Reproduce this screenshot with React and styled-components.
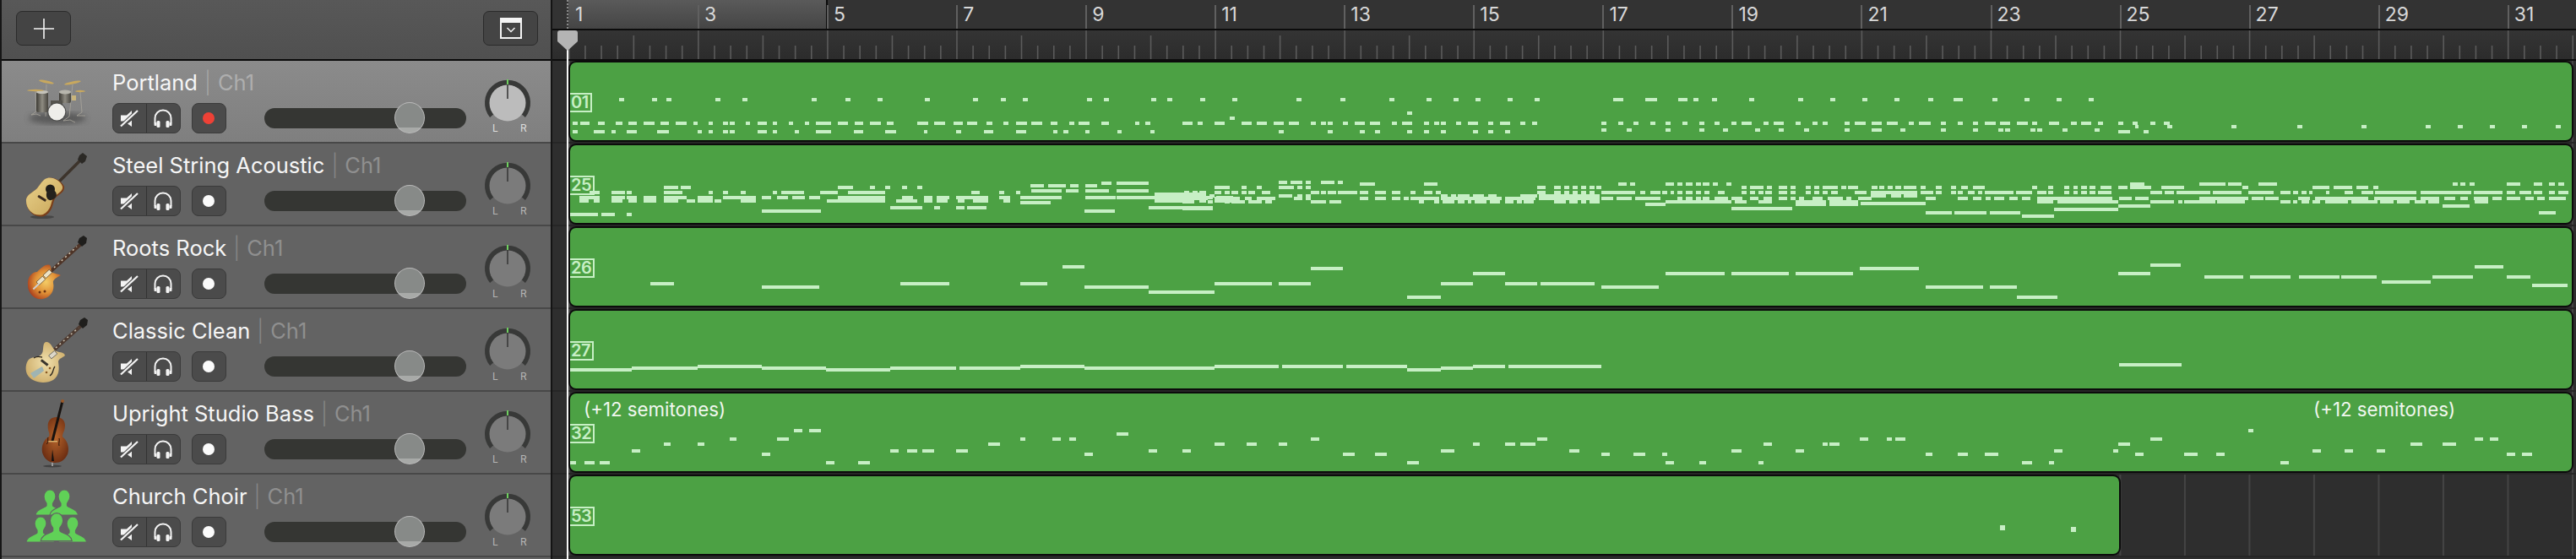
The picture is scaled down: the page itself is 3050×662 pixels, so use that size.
import React from "react";
import styled, { createGlobalStyle } from "styled-components";

const BAR = 76.53;
const NOTE_COLOR = "#c7efc5";

const GlobalStyle = createGlobalStyle`
  html, body {
    margin: 0;
    padding: 0;
    background: #2e2e2e;
    overflow: hidden;
  }
  * { box-sizing: border-box; }
`;

// turns runs read off the picture at some scale into page coordinates
const runs = (origin, scale, top, pairs) =>
  pairs.map(([a, b]) => {
    const x = Math.round(origin + a / scale);
    return [x, Math.max(x + 3, Math.round(origin + b / scale)), top];
  });
const dots = (top, xs) => xs.map((x) => [x, x + 6, top]);

const portlandNotes = [
  ...dots(116, [733, 772, 789, 847, 879, 961, 1001, 1039, 1095, 1152, 1185, 1211, 1287, 1307, 1363, 1382, 1421, 1459, 1535, 1587, 1645, 1689, 1721, 1747, 1785, 1817, 2005, 2027, 2071, 2129, 2167, 2205, 2243, 2283, 2359, 2397, 2435, 2473]),
  [1910, 1922, 116], [1948, 1962, 116], [1987, 1998, 116], [2313, 2324, 116],
  [1666, 1672, 132], [1456, 1462, 138],
  ...runs(660, 1.96, 144, [[35,47],[52,75],[95,110],[135,150],[165,185],[200,225],[240,258],[275,300],[315,325],[350,360],[385,395],[400,412],[437,447],[465,487],[500,510],[537,547],[575,585],[600,635],[650,675],[690,710],[725,750],[765,780],[835,860],[875,900],[920,940],[950,975],[995,1010],[1035,1047],[1065,1090],[1100,1125],[1145,1160],[1188,1200],[1210,1235],[1262,1280],[1340,1350],[1365,1375]]),
  ...runs(660, 1.96, 154, [[35,47],[85,110],[125,135],[160,185],[232,258],[325,335],[350,360],[385,395],[400,412],[465,487],[500,510],[550,560],[600,635],[688,710],[760,785],[850,858],[925,937],[990,1012],[1065,1088],[1150,1160],[1175,1185],[1225,1235],[1300,1310],[1375,1385]]),
  ...runs(1400, 1.96, 144, [[0,24],[35,47],[74,98],[137,161],[172,196],[212,235],[247,270],[298,310],[322,333],[337,349],[372,384],[400,423],[435,459],[486,498],[510,533],[561,573],[584,596],[600,612],[635,647],[662,686],[710,721],[737,760],[784,796],[811,823],[972,984],[1011,1023],[1047,1058],[1086,1098],[1121,1133],[1160,1172],[1200,1211],[1235,1247],[1274,1286],[1298,1321],[1348,1360],[1372,1396],[1423,1435],[1462,1474],[1486,1498],[1537,1549],[1560,1568]]),
  ...runs(1400, 1.96, 154, [[223,235],[337,349],[412,423],[447,459],[521,533],[561,573],[600,612],[674,686],[710,721],[749,760]]),
  ...runs(1400, 1.96, 152, [[972,984],[1031,1043],[1121,1133],[1200,1211],[1254,1266],[1329,1341],[1384,1396],[1443,1455],[1537,1549]]),
  ...runs(2200, 1.845, 144, [[0,16],[30,52],[63,86],[111,122],[133,158],[181,192],[218,229],[251,262],[276,300],[310,333],[347,370],[380,392],[417,440],[465,478],[488,510],[524,535],[568,579],[599,610],[638,650],[668,680]]),
  ...runs(2200, 1.845, 152, [[30,52],[92,103],[181,192],[251,262],[306,318],[321,333],[376,388],[391,403],[446,457],[516,528]]),
  ...runs(2200, 1.845, 154, [[568,594],[624,635]]),
  ...runs(2200, 1.845, 148, [[605,612],[675,686],[815,826],[959,970],[1099,1111],[1240,1251],[1310,1321],[1380,1391],[1450,1461],[1524,1535]]),
];

const acousticNotes = [
  ...runs(660, 1.96, 220, [[247,280],[287,310],[650,686],[725,737],[760,772],[800,812],[835,847],[1525,1560]]),
  ...runs(660, 1.96, 226, [[75,98],[125,157],[160,172],[247,290],[350,360],[385,395],[425,437],[500,510],[520,572],[610,650],[675,760],[960,980],[1025,1037],[1065,1075]]),
  ...runs(660, 1.96, 232, [[50,98],[125,157],[160,185],[200,230],[247,300],[325,360],[385,460],[475,495],[510,535],[545,575],[585,610],[650,760],[800,825],[850,870],[880,910],[925,1000],[1025,1050],[1075,1170],[1225,1295],[1298,1372],[1372,1520],[1528,1568]]),
  ...runs(660, 1.96, 236, [[50,72],[85,98],[125,150],[165,185],[200,230],[247,280],[300,320],[325,360],[365,380],[425,460],[625,760],[785,835],[850,870],[880,905],[930,945],[965,1000],[1035,1050],[1385,1475],[1490,1505],[1525,1568]]),
  ...runs(660, 1.96, 238, [[1075,1145]]),
  ...runs(660, 1.96, 244, [[772,847],[875,887],[925,945],[950,996],[1372,1521]]),
  ...runs(660, 1.96, 248, [[474,612],[1223,1294]]),
  ...runs(660, 1.96, 252, [[30,94],[102,133],[160,172]]),
  ...runs(660, 1.96, 218, [[1098,1128],[1138,1180],[1190,1210],[1225,1253]]),
  ...runs(660, 1.96, 215, [[1262,1285],[1298,1372]]),
  ...runs(660, 1.96, 224, [[1100,1170],[1180,1210],[1225,1280],[1298,1372]]),
  ...runs(660, 1.96, 228, [[1385,1505]]),
  ...runs(1400, 1.96, 214, [[223,243],[251,278],[286,298],[321,353],[360,372]]),
  ...runs(1400, 1.96, 216, [[412,447],[561,592],[1011,1031],[1039,1050],[1121,1141],[1149,1160],[1168,1184],[1192,1204],[1207,1223],[1231,1243],[1262,1274]]),
  ...runs(1400, 1.96, 220, [[74,110],[137,149],[172,184],[223,259],[267,278],[286,298],[823,843],[862,878],[886,898],[906,918],[925,937],[945,957],[960,972],[1298,1309],[1317,1348],[1356,1368],[1384,1403],[1411,1423],[1446,1458],[1466,1478],[1486,1521],[1529,1541],[1545,1568]]),
  ...runs(1400, 1.96, 226, [[4,16],[24,35],[39,55],[74,90],[98,110],[114,129],[137,149],[153,169],[184,204],[298,318],[321,333],[337,357],[361,405],[412,431],[447,473],[486,505],[529,541],[561,580],[588,600],[823,843],[862,878],[886,898],[906,918],[925,937],[945,957],[972,1050],[1062,1074],[1086,1110],[1113,1125],[1133,1141],[1149,1160],[1168,1184],[1192,1204],[1212,1223],[1243,1258],[1298,1309],[1317,1329],[1337,1348],[1352,1368],[1384,1403],[1411,1423],[1446,1458],[1466,1478],[1486,1498],[1505,1521],[1560,1568]]),
  ...runs(1400, 1.96, 230, [[0,55],[63,74],[223,255],[267,278],[286,298],[600,615],[624,635],[639,666],[675,700],[710,729],[784,823],[827,968]]),
  ...runs(1400, 1.96, 233, [[0,58],[74,98],[110,133],[145,161],[172,216],[259,278],[286,298],[412,431],[447,473],[486,505],[513,525],[529,596],[600,741],[749,819],[827,968],[972,1000],[1007,1043],[1051,1109],[1149,1160],[1168,1184],[1192,1204],[1207,1223],[1235,1266],[1274,1300],[1317,1337],[1348,1368],[1384,1403],[1411,1423],[1431,1443],[1462,1486],[1497,1533],[1541,1553]]),
  ...runs(1400, 1.96, 237, [[0,27],[59,71],[98,110],[114,145],[153,184],[192,208],[298,333],[341,368],[549,561],[584,596],[604,631],[639,655],[663,670],[678,706],[713,737],[749,768],[776,788],[792,815],[862,890],[898,918],[925,937],[945,968],[1121,1274],[1282,1309],[1337,1368],[1423,1494],[1501,1568]]),
  ...runs(1400, 1.96, 240, [[1074,1121],[1423,1494],[1501,1568]]),
  ...runs(1400, 1.96, 245, [[0,71],[1274,1415]]),
  ...runs(2200, 1.845, 216, [[594,625],[745,802],[808,837],[874,915],[1299,1310],[1316,1327],[1336,1347],[1417,1447],[1476,1495],[1510,1522],[1530,1542]]),
  ...runs(2200, 1.845, 220, [[30,42],[46,58],[64,76],[82,94],[100,128],[136,148],[170,182],[203,214],[226,240],[250,277],[380,392],[415,427],[450,462],[470,480],[488,500],[506,518],[530,553],[568,588],[594,640],[662,712],[840,852],[992,1029],[1038,1080],[1088,1115],[1125,1136]]),
  ...runs(2200, 1.845, 226, [[0,18],[28,130],[136,165],[170,182],[203,214],[218,229],[240,255],[262,272],[277,340],[345,380],[392,411],[415,427],[450,462],[470,480],[488,500],[506,518],[524,553],[638,665],[670,690],[695,770],[775,838],[852,908],[922,945],[950,962],[968,979],[985,993],[1023,1029],[1062,1081],[1100,1125],[1130,1220],[1228,1340],[1345,1408],[1417,1436],[1445,1470],[1476,1495],[1510,1522],[1530,1552]]),
  ...runs(2200, 1.845, 230, [[28,60],[72,95],[100,130]]),
  ...runs(2200, 1.845, 233, [[0,30],[148,170],[218,240],[250,270],[278,290],[297,320],[330,348],[358,376],[392,555],[570,597],[605,635],[745,852],[860,885],[889,918],[962,987],[998,1115],[1128,1220],[1228,1270],[1280,1305],[1315,1332],[1345,1377],[1385,1405],[1417,1447],[1458,1476],[1484,1500],[1510,1546]]),
  ...runs(2200, 1.845, 237, [[392,427],[435,568],[638,690],[700,708],[712,780],[784,845],[922,945],[950,960],[968,985],[992,1010],[1020,1070],[1078,1135],[1140,1170],[1178,1205],[1215,1240],[1245,1270],[1347,1377]]),
  ...runs(2200, 1.845, 239, [[5,148]]),
  ...runs(2200, 1.845, 242, [[568,638],[1277,1336]]),
  ...runs(2200, 1.845, 246, [[428,568]]),
  ...runs(2200, 1.845, 250, [[148,204],[210,280],[288,355],[1487,1524]]),
  ...runs(2200, 1.845, 254, [[358,428]]),
];

const rootsNotes = [
  [770,798,334],[902,970,338],[1066,1124,334],[1208,1240,334],[1258,1284,314],[1284,1360,338],[1360,1438,344],
  [1438,1506,334],[1514,1552,334],[1552,1590,316],[1666,1706,350],[1706,1744,334],[1744,1782,322],[1782,1820,334],
  [1824,1888,334],[1896,1964,338],[1972,2042,322],[2050,2118,322],[2126,2194,322],[2202,2272,316],[2280,2348,338],
  [2356,2388,338],[2388,2436,350],[2508,2546,322],[2546,2582,312],[2610,2656,326],[2664,2712,326],[2722,2770,326],
  [2772,2814,326],[2820,2878,332],[2880,2928,326],[2930,2964,314],[2968,2996,326],[2998,3040,336],
];

const classicNotes = [
  [675,748,436],[748,826,434],[826,902,432],[902,978,434],[978,1054,436],[1054,1132,434],[1136,1208,434],
  [1208,1284,432],[1284,1438,434],[1438,1514,432],[1518,1590,432],[1594,1666,432],[1666,1706,436],[1706,1744,434],
  [1744,1782,432],[1786,1896,432],[2509,2583,430],
];

const bassNotes = [
  [675,682,546],[692,704,546],[710,722,546],[748,758,532],[786,794,524],[826,834,524],[864,872,518],[902,912,536],
  [920,934,518],[940,950,508],[958,972,508],[978,988,546],[1016,1030,546],[1054,1064,532],[1074,1086,532],[1092,1106,532],
  [1132,1146,532],[1170,1184,524],[1208,1214,518],[1246,1256,518],[1266,1274,518],[1284,1294,536],[1322,1336,512],
  [1360,1370,532],[1400,1410,532],[1438,1450,524],[1476,1488,524],[1514,1524,524],[1552,1562,518],[1590,1604,536],
  [1628,1642,536],[1666,1680,546],[1706,1722,532],[1744,1752,524],[1782,1794,524],[1800,1818,524],[1820,1832,518],
  [1858,1870,532],[1896,1906,536],[1934,1948,536],[1968,1974,536],[1972,1982,546],[2012,2020,546],[2050,2062,532],
  [2082,2088,546],[2088,2098,524],[2126,2136,532],[2158,2164,524],[2166,2178,524],[2202,2212,518],[2234,2240,518],
  [2244,2256,518],[2280,2288,536],[2318,2330,536],[2350,2366,536],[2394,2406,546],[2426,2432,546],[2432,2442,532],
  [2502,2508,532],[2508,2522,524],[2528,2538,536],[2546,2560,518],[2586,2602,536],[2624,2634,536],[2662,2668,508],
  [2700,2710,546],[2738,2748,532],[2776,2786,532],[2814,2824,532],[2854,2868,524],[2892,2908,524],[2930,2940,518],
  [2948,2958,518],[2968,2978,536],[2986,2998,536],
];

const tracks = [
  { name: "Portland", Icon: DrumsIcon, label: "01", notes: portlandNotes, width: 2374, selected: true },
  { name: "Steel String Acoustic", Icon: AcousticIcon, label: "25", notes: acousticNotes, width: 2374 },
  { name: "Roots Rock", Icon: LesPaulIcon, label: "26", notes: rootsNotes, width: 2374 },
  { name: "Classic Clean", Icon: HollowIcon, label: "27", notes: classicNotes, width: 2374 },
  { name: "Upright Studio Bass", Icon: BassIcon, label: "32", notes: bassNotes, width: 2374, transposed: true },
  { name: "Church Choir", Icon: ChoirIcon, label: "53", notes: [[2368, 2374, 622, 6], [2452, 2458, 624, 6]], width: 1838 },
];

export default function App() {
  return (
    <Page>
      <GlobalStyle />
      <Sidebar>
        <Header>
          <HeaderButton>
            <svg width="26" height="26" viewBox="0 0 26 26">
              <path d="M13 1v24M1 13h24" stroke="#f4f4f4" strokeWidth="1.6" />
            </svg>
          </HeaderButton>
          <HeaderButton>
            <svg width="28" height="27" viewBox="0 0 28 27">
              <rect x="2" y="2" width="24" height="23" fill="none" stroke="#f4f4f4" strokeWidth="2" />
              <rect x="2" y="1" width="24" height="6" fill="#f4f4f4" />
              <path d="M9.5 13l4.5 4.5 4.5-4.5" fill="none" stroke="#f4f4f4" strokeWidth="1.5" />
            </svg>
          </HeaderButton>
        </Header>
        {tracks.map((t) => (
          <TrackRow key={t.name} $selected={t.selected}>
            <IconSlot>
              <t.Icon />
            </IconSlot>
            <TrackInfo>
              <NameLine>
                {t.name}
                <Divider $selected={t.selected}>|</Divider>
                <Channel $selected={t.selected}>Ch1</Channel>
              </NameLine>
              <Controls>
                <ButtonGroup>
                  <GroupButton>
                    <MuteIcon />
                  </GroupButton>
                  <GroupButton>
                    <HeadphonesIcon />
                  </GroupButton>
                </ButtonGroup>
                <RecordButton>
                  <RecordDot $armed={t.selected} />
                </RecordButton>
                <Fader>
                  <FaderThumb />
                </Fader>
              </Controls>
            </TrackInfo>
            <PanKnob selected={t.selected} />
          </TrackRow>
        ))}
      </Sidebar>

      <Timeline>
        <BarRuler>
          <CycleRegion />
          {Array.from({ length: 16 }, (_, i) => (
            <BarCell key={i} $first={i === 0}>
              {i * 2 + 1}
            </BarCell>
          ))}
        </BarRuler>
        <BeatRuler>
          <BeatTicks />
        </BeatRuler>
        {tracks.map((t) => (
          <Lane key={t.name}>
            <Region $width={t.width}>
              <Notes>
                {t.notes.map(([x1, x2, y, h], i) => (
                  <rect key={i} x={x1 - 675} y={y - (74 + 98 * tracks.indexOf(t))} width={x2 - x1} height={h || 4} />
                ))}
              </Notes>
              <RegionLabel>{t.label}</RegionLabel>
              {t.transposed && (
                <>
                  <Transpose $left={16}>(+12 semitones)</Transpose>
                  <Transpose $left={2064}>(+12 semitones)</Transpose>
                </>
              )}
            </Region>
          </Lane>
        ))}
        <Playhead>
          <svg width="26" height="26" viewBox="0 0 26 26">
            <path d="M1 4a3 3 0 0 1 3-3h18a3 3 0 0 1 3 3v10l-12 11L1 14z" fill="#b4b4b4" />
          </svg>
        </Playhead>
      </Timeline>
    </Page>
  );
}

function MuteIcon() {
  return (
    <svg width="22" height="22" viewBox="0 0 22 22">
      <path d="M1 7.5h7L14 2v18l-6-5.500H1z" fill="#f4f4f4" />
      <path d="M0 23L23 1" stroke="#4b4b4b" strokeWidth="6" />
      <path d="M1 20.500L21 2" stroke="#f4f4f4" strokeWidth="2.200" />
      <path d="M14 14v7l-5-3.500z" fill="#f4f4f4" />
    </svg>
  );
}

function HeadphonesIcon() {
  return (
    <svg width="24" height="23" viewBox="0 0 24 23">
      <path d="M2.500 17v-6a9.500 9.500 0 0 1 19 0v6" fill="none" stroke="#f4f4f4" strokeWidth="2" />
      <rect x="4.500" y="14" width="4" height="8" rx="1.500" fill="#f4f4f4" />
      <rect x="15.500" y="14" width="4" height="8" rx="1.500" fill="#f4f4f4" />
      <rect x="1.500" y="16" width="3" height="4" rx="1" fill="#f4f4f4" />
      <rect x="19.500" y="16" width="3" height="4" rx="1" fill="#f4f4f4" />
    </svg>
  );
}

function PanKnob({ selected }) {
  return (
    <KnobSvg width="60" height="70" viewBox="0 0 60 70">
      <path d="M11.400 47A24 24 0 1 1 48.600 47" fill="none" stroke="#383938" strokeWidth="6" />
      <circle cx="30" cy="32" r="21.500" fill={selected ? "#bcbcbc" : "#7b7b7b"} />
      <rect x="29" y="4" width="2" height="6" fill="#6fd05f" />
      <rect x="29.200" y="10" width="1.600" height="17" fill="#3a3a3a" />
      <KnobLetter x="12" y="66" $selected={selected}>L</KnobLetter>
      <KnobLetter x="45" y="66" $selected={selected}>R</KnobLetter>
    </KnobSvg>
  );
}

function BeatTicks() {
  const ticks = [];
  for (let bar = 0; bar < 32; bar++) {
    const x = 19 + bar * BAR;
    ticks.push(<rect key={bar} x={x} y={bar % 2 === 0 ? 0 : 6} width="1.600" height="34" />);
    for (let beat = 1; beat < 4; beat++) {
      ticks.push(<rect key={`${bar}-${beat}`} x={x + (beat * BAR) / 4} y="18" width="1.600" height="16" />);
    }
  }
  return <TickSvg width="2396" height="34">{ticks}</TickSvg>;
}

function DrumsIcon() {
  return (
    <svg width="84" height="84" viewBox="0 0 84 84">
      <defs>
        <filter id="drumShadow"><feGaussianBlur stdDeviation="3" /></filter>
        <linearGradient id="shell" x1="0" x2="1">
          <stop offset="0" stopColor="#3c3a34" />
          <stop offset=".5" stopColor="#8f8c82" />
          <stop offset="1" stopColor="#46443e" />
        </linearGradient>
      </defs>
      <ellipse cx="44" cy="60" rx="34" ry="7" fill="#4a4a4a" opacity=".7" filter="url(#drumShadow)" />
      <g stroke="#a9a69c" strokeWidth=".8" fill="none">
        <path d="M31 20L30 58M62 20l-4 38M18 28l1 24M71 29l2 24" />
        <path d="M19 52l-6 4 6-1 5 2M58 58l-7 5 8-1 6 3M73 53l-6 4 10 0" />
      </g>
      <rect x="19" y="29" width="14" height="24" rx="2" fill="url(#shell)" />
      <ellipse cx="26" cy="29" rx="7" ry="2" fill="#c5c3ba" />
      <rect x="46" y="29" width="14" height="13" rx="2" fill="url(#shell)" />
      <ellipse cx="53" cy="29" rx="7" ry="2.500" fill="#b8b6ad" />
      <rect x="61" y="33" width="5" height="6" fill="#c9b47b" />
      <rect x="36" y="39" width="14" height="9" fill="#55534d" />
      <circle cx="43.300" cy="52.500" r="11" fill="#4a4a48" />
      <circle cx="43.300" cy="52.500" r="10" fill="#efeeea" />
      <ellipse cx="31" cy="17" rx="9" ry="1.600" fill="#c8a85e" transform="rotate(12 31 17)" />
      <ellipse cx="62" cy="18" rx="10" ry="1.600" fill="#c8a85e" transform="rotate(-12 62 18)" />
      <ellipse cx="18" cy="27" rx="10" ry="1.200" fill="#c8a85e" />
      <ellipse cx="71" cy="28" rx="6" ry="1.200" fill="#c8a85e" />
    </svg>
  );
}

function AcousticIcon() {
  return (
    <svg width="84" height="84" viewBox="0 0 84 84">
      <defs>
        <linearGradient id="spruce" x1="0" y1="0" x2="1" y2="1">
          <stop offset="0" stopColor="#e9d28c" />
          <stop offset="1" stopColor="#c8a558" />
        </linearGradient>
      </defs>
      <ellipse cx="26" cy="79" rx="14" ry="2" fill="#333" opacity=".6" />
      <path d="M38 45L72 11" stroke="#3d342c" strokeWidth="3.500" />
      <path d="M70 6l4-3 5 4-2 6-4 3-5-5z" fill="#2b2925" />
      <path d="M33 33C39 31 49 36 52 43C53 50 45 52 41 57C38 63 39 73 28 78C17 81 6 71 7 58C8 52 15 50 20 45C24 40 27 34 33 33Z" fill="#7a3f1a" />
      <path d="M32 33C38 31 48 36 50 43C51 49 44 51 39 56C36 62 37 71 27 76C16 79 6 70 7 58C8 52 15 50 20 45C24 40 27 34 32 33Z" fill="url(#spruce)" />
      <circle cx="35.500" cy="46" r="5.500" fill="#1e1c18" />
      <path d="M31 51a6 6 0 1 1 8 7c-4 3-9 0-8-7z" fill="#24211c" />
      <rect x="20" y="55" width="11" height="3" rx="1" fill="#3a2a1d" transform="rotate(32 25 57)" />
    </svg>
  );
}

function LesPaulIcon() {
  return (
    <svg width="84" height="84" viewBox="0 0 84 84">
      <defs>
        <radialGradient id="burst" cx=".55" cy=".5" r=".6">
          <stop offset="0" stopColor="#f4cc66" />
          <stop offset=".55" stopColor="#df8f36" />
          <stop offset="1" stopColor="#a5371a" />
        </radialGradient>
      </defs>
      <path d="M33 48L73 12" stroke="#4e3427" strokeWidth="4" />
      <path d="M40 41l27-25" stroke="#d8cdb8" strokeWidth="1.500" strokeDasharray="2 4" />
      <path d="M70 6l5-3 4 3-1 6-5 4-5-5z" fill="#1f1e1c" />
      <path d="M35 38C30 36 24 42 20 46C14 46 8 52 9 62C9 72 18 80 27 78C36 76 41 68 39 59C38 55 44 52 48 50C44 48 39 48 37 46C36 44 37 40 35 38Z" fill="url(#burst)" />
      <rect x="27" y="46" width="10" height="5" fill="#ece2c5" stroke="#4a3a28" strokeWidth=".6" transform="rotate(-43 32 48)" />
      <rect x="19" y="54" width="10" height="5" fill="#ece2c5" stroke="#4a3a28" strokeWidth=".6" transform="rotate(-43 24 56)" />
      <rect x="14" y="62" width="10" height="2" fill="#cfcfcf" transform="rotate(-43 19 63)" />
      <circle cx="23" cy="70" r="1.500" fill="#6b3312" />
      <circle cx="29" cy="69" r="1.500" fill="#6b3312" />
    </svg>
  );
}

function HollowIcon() {
  return (
    <svg width="84" height="84" viewBox="0 0 84 84">
      <defs>
        <radialGradient id="maple" cx=".5" cy=".5" r=".65">
          <stop offset="0" stopColor="#f0e0ad" />
          <stop offset="1" stopColor="#c8a55f" />
        </radialGradient>
      </defs>
      <path d="M36 44L74 10" stroke="#4d3a30" strokeWidth="4" />
      <path d="M42 38l27-24" stroke="#cfc6b4" strokeWidth="1.500" strokeDasharray="2 4" />
      <path d="M71 5l5-3 4 3-1 6-5 4-5-5z" fill="#1f1e1c" />
      <path d="M30 31C36 30 38 38 41 41C45 44 52 42 53 47C50 50 46 50 45 54C46 62 47 70 39 76C30 81 14 80 8 69C5 62 7 52 13 50C19 48 24 49 26 44C28 40 26 33 30 31Z" fill="url(#maple)" />
      <path d="M16 50c5-3 7-1 10-1M35 71c5-3 3-8 6-11" fill="none" stroke="#2a241c" strokeWidth="1.300" />
      <rect x="34" y="44" width="9" height="5" fill="#dcd7c8" stroke="#3a3a3a" strokeWidth=".6" transform="rotate(-40 38 46)" />
      <rect x="24" y="54" width="10" height="3" fill="#3a352d" transform="rotate(38 29 55)" />
      <path d="M12 68l14-8 2 5-12 9z" fill="#9fb4b2" />
      <circle cx="35" cy="62" r="1.300" fill="#8a5a22" />
      <circle cx="31" cy="67" r="1.300" fill="#8a5a22" />
    </svg>
  );
}

function BassIcon() {
  return (
    <svg width="84" height="84" viewBox="0 0 84 84">
      <defs>
        <radialGradient id="spruceBass" cx=".5" cy=".45" r=".65">
          <stop offset="0" stopColor="#b5642b" />
          <stop offset="1" stopColor="#64270f" />
        </radialGradient>
      </defs>
      <ellipse cx="38" cy="80" rx="11" ry="1.500" fill="#333" opacity=".7" />
      <rect x="37" y="74" width="2" height="6" fill="#9a9a9a" />
      <g transform="rotate(3 41 48)">
        <path d="M42 22C35 22 31 27 32 34C32 39 35 41 34 45C28 49 25 57 27 65C30 73 36 76 42 76C48 76 54 73 57 65C59 57 56 49 50 45C49 41 52 39 52 34C53 27 49 22 42 22Z" fill="url(#spruceBass)" />
      </g>
      <path d="M50 3L38 50" stroke="#17120f" strokeWidth="3" />
      <circle cx="50" cy="3" r="2" fill="#9a5a2b" />
      <path d="M38 60l-1 14h3z" fill="#151210" />
      <rect x="32" y="50" width="12" height="1.500" fill="#d5b06c" />
      <path d="M31 54c3-2 1-6 2-8M46 56c-1-3 1-6 0-9" fill="none" stroke="#27130a" strokeWidth="1" />
    </svg>
  );
}

function ChoirSinger({ x, y, scale = 1 }) {
  return (
    <path
      transform={`translate(${x} ${y}) scale(${scale})`}
      d="M0-13c4.500 0 7 3.500 7 8 0 3.500-2 6-3.500 8v3c2 3 12 3 13 11H-17c1-8 11-8 13-11V3C-5.500 1-7-1.500-7-5c0-4.500 3-8 7-8z"
      fill="#60d157"
      stroke="#636363"
      strokeWidth="1.200"
    />
  );
}

function ChoirIcon() {
  return (
    <svg width="84" height="84" viewBox="0 0 84 84">
      <ChoirSinger x={35} y={23} />
      <ChoirSinger x={52} y={23} />
      <ChoirSinger x={24} y={55} />
      <ChoirSinger x={62} y={55} />
      <ChoirSinger x={43} y={52} scale={1.100} />
    </svg>
  );
}

const Page = styled.div`
  display: flex;
  width: 3050px;
  height: 662px;
  overflow: hidden;
  font-family: Inter, "Liberation Sans", sans-serif;
`;

const Sidebar = styled.aside`
  width: 652px;
  flex: none;
  border-left: 2px solid #161616;
  background: #636363;
`;

const Header = styled.div`
  height: 72px;
  display: flex;
  justify-content: space-between;
  padding: 13px 15px 0 17px;
  background: linear-gradient(#585858, #505050);
  border-bottom: 2px solid #0a0a0a;
`;

const HeaderButton = styled.div`
  width: 65px;
  height: 41px;
  display: flex;
  align-items: center;
  justify-content: center;
  border-radius: 7px;
  border: 1.5px solid #2b2b2b;
  background: #444;
`;

const TrackRow = styled.div`
  height: 98px;
  display: flex;
  padding-left: 22px;
  border-bottom: 2px solid #484848;
  background: ${(p) => (p.$selected ? "linear-gradient(#8b8b8b, #7f7f7f)" : "#636363")};
`;

const IconSlot = styled.div`
  width: 84px;
  flex: none;
  padding-top: 8px;
`;

const TrackInfo = styled.div`
  width: 419px;
  flex: none;
  margin-left: 25px;
  padding-top: 10px;
`;

const NameLine = styled.div`
  height: 32px;
  line-height: 32px;
  font-size: 25.500px;
  font-weight: 400;
  color: #f6f6f6;
  white-space: nowrap;
`;

const Divider = styled.span`
  margin: 0 8px;
  color: ${(p) => (p.$selected ? "#a5a5a5" : "#868686")};
  font-weight: 300;
`;

const Channel = styled.span`
  color: ${(p) => (p.$selected ? "#aeaeae" : "#8f8f8f")};
`;

const Controls = styled.div`
  display: flex;
  align-items: center;
  margin-top: 8px;
  height: 36px;
`;

const ButtonGroup = styled.div`
  display: flex;
  width: 81px;
  height: 36px;
  border-radius: 8px;
  border: 1.5px solid #3a3a3a;
  background: #4b4b4b;
  overflow: hidden;
`;

const GroupButton = styled.div`
  flex: 1;
  display: flex;
  align-items: center;
  justify-content: center;
  & + & {
    border-left: 1.5px solid #333;
  }
`;

const RecordButton = styled.div`
  width: 41px;
  height: 36px;
  margin-left: 13px;
  display: flex;
  align-items: center;
  justify-content: center;
  border-radius: 8px;
  border: 1.5px solid #3a3a3a;
  background: #4b4b4b;
`;

const RecordDot = styled.span`
  width: 14px;
  height: 14px;
  border-radius: 50%;
  background: ${(p) => (p.$armed ? "#ee4136" : "#fbfbfb")};
`;

const Fader = styled.div`
  position: relative;
  width: 240px;
  height: 24px;
  margin-left: 45px;
  border-radius: 12px;
  background: #353633;
`;

const FaderThumb = styled.div`
  position: absolute;
  left: 154px;
  top: -7px;
  width: 36px;
  height: 37px;
  border-radius: 50%;
  border: 1.5px solid #b9b9b9;
  background: linear-gradient(#878a88 82%, #a8aaa8 82%);
`;

const KnobSvg = styled.svg`
  flex: none;
  margin-left: 19px;
  margin-top: 18px;
`;

const KnobLetter = styled.text`
  font-size: 12px;
  font-family: Inter, "Liberation Sans", sans-serif;
  fill: ${(p) => (p.$selected ? "#dedede" : "#b5b5b5")};
`;

const Timeline = styled.main`
  position: relative;
  flex: 1;
  min-width: 0;
  border-left: 2px solid #141414;
  background: #2e2e2e;
`;

const BarRuler = styled.div`
  position: relative;
  height: 36px;
  display: flex;
  padding-left: 19px;
  background: #333;
  border-bottom: 2px solid #0c0c0c;
  overflow: hidden;
`;

const CycleRegion = styled.div`
  position: absolute;
  left: 19px;
  top: 0;
  width: 307px;
  height: 34px;
  background: linear-gradient(#5a5a5a, #454545);
  border-right: 2px solid #0c0c0c;
`;

const BarCell = styled.div`
  position: relative;
  flex: none;
  width: ${BAR * 2}px;
  height: 34px;
  padding: 5px 0 0 8px;
  font-size: 23px;
  line-height: 24px;
  font-family: Inter, "Liberation Sans", sans-serif;
  color: #d8d8d8;
  background: ${(p) => (p.$first ? "none" : "linear-gradient(#606060, #606060) left 6px / 2px 28px no-repeat")};
`;

const BeatRuler = styled.div`
  height: 36px;
  background: linear-gradient(#343434, #2c2c2c);
  border-bottom: 2px solid #0c0c0c;
`;

const TickSvg = styled.svg`
  display: block;
  fill: #5b5b5b;
`;

const Lane = styled.div`
  height: 98px;
  padding-left: 19px;
  background-color: #2e2e2e;
  background-image: linear-gradient(to right, #444 2px, transparent 2px);
  background-size: ${BAR}px 100%;
  background-position: 19px 0;
  border-bottom: 2px solid #262626;
`;

const Region = styled.div`
  position: relative;
  width: ${(p) => p.$width}px;
  height: 96px;
  border: 2px solid #0b0b0b;
  border-radius: 9px;
  background: #4ca144;
  overflow: hidden;
`;

const Notes = styled.svg`
  position: absolute;
  left: 0;
  top: 0;
  width: 100%;
  height: 100%;
  fill: ${NOTE_COLOR};
  shape-rendering: crispEdges;
`;

const RegionLabel = styled.span`
  position: absolute;
  left: 0;
  top: 36px;
  height: 23px;
  padding: 0 2px 0 1px;
  border: 2px solid ${NOTE_COLOR};
  border-left: none;
  color: ${NOTE_COLOR};
  font-size: 20px;
  letter-spacing: -0.5px;
  line-height: 19px;
  font-weight: 600;
`;

const Transpose = styled.span`
  position: absolute;
  left: ${(p) => p.$left}px;
  top: 8px;
  font-size: 22.300px;
  line-height: 22px;
  color: #f0f7ee;
  white-space: nowrap;
`;

const Playhead = styled.div`
  position: absolute;
  left: 17px;
  top: 0;
  bottom: 0;
  width: 2px;
  background: linear-gradient(#8a8a8a 50%, transparent 50%) top / 2px 4px repeat-y;
  &::after {
    content: "";
    position: absolute;
    left: 0;
    top: 36px;
    bottom: 0;
    width: 2px;
    background: #f6f6f6;
  }
  svg {
    position: absolute;
    z-index: 1;
    left: -12px;
    top: 35px;
  }
`;
